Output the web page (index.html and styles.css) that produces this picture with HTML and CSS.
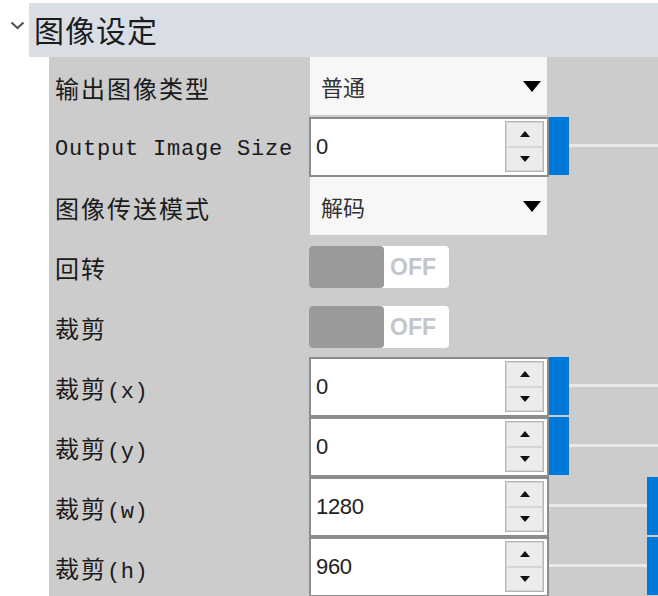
FILE: index.html
```html
<!DOCTYPE html>
<html lang="zh-CN">
<head>
  <meta charset="UTF-8">
  <meta name="viewport" content="width=device-width, initial-scale=1.0">
  <title>图像设定</title>
  <link rel="stylesheet" href="styles.css">
</head>
<body>
  <div class="page">
    <header class="group-head">
      <span class="chevron">
        <svg width="15" height="9" viewBox="0 0 15 9"><path d="M1.5 1.5 L7.5 7 L13.5 1.5" fill="none" stroke="#555" stroke-width="2.2"/></svg>
      </span>
      <h1 class="group-title">图像设定</h1>
    </header>

    <section class="panel">
      <div class="row">
        <span class="label">输出图像类型</span>
        <div class="select"><span>普通</span><i class="caret"></i></div>
      </div>

      <div class="row">
        <span class="label mono">Output Image Size</span>
        <div class="spin">
          <span class="value">0</span>
          <div class="spin-btns"><b class="up"></b><b class="down"></b></div>
        </div>
        <div class="slider"><div class="track"></div><div class="thumb" style="left:0px"></div></div>
      </div>

      <div class="row">
        <span class="label">图像传送模式</span>
        <div class="select"><span>解码</span><i class="caret"></i></div>
      </div>

      <div class="row">
        <span class="label">回转</span>
        <div class="toggle"><span class="knob"></span><span class="state">OFF</span></div>
      </div>

      <div class="row">
        <span class="label">裁剪</span>
        <div class="toggle"><span class="knob"></span><span class="state">OFF</span></div>
      </div>

      <div class="row">
        <span class="label">裁剪<span class="mono">(x)</span></span>
        <div class="spin">
          <span class="value">0</span>
          <div class="spin-btns"><b class="up"></b><b class="down"></b></div>
        </div>
        <div class="slider"><div class="track"></div><div class="thumb" style="left:0px"></div></div>
      </div>

      <div class="row">
        <span class="label">裁剪<span class="mono">(y)</span></span>
        <div class="spin">
          <span class="value">0</span>
          <div class="spin-btns"><b class="up"></b><b class="down"></b></div>
        </div>
        <div class="slider"><div class="track"></div><div class="thumb" style="left:0px"></div></div>
      </div>

      <div class="row">
        <span class="label">裁剪<span class="mono">(w)</span></span>
        <div class="spin">
          <span class="value">1280</span>
          <div class="spin-btns"><b class="up"></b><b class="down"></b></div>
        </div>
        <div class="slider"><div class="track"></div><div class="thumb" style="left:98px"></div></div>
      </div>

      <div class="row">
        <span class="label">裁剪<span class="mono">(h)</span></span>
        <div class="spin">
          <span class="value">960</span>
          <div class="spin-btns"><b class="up"></b><b class="down"></b></div>
        </div>
        <div class="slider"><div class="track"></div><div class="thumb" style="left:98px"></div></div>
      </div>
    </section>
  </div>
</body>
</html>
```

FILE: styles.css
```css
/* styles.css */
* {
  margin: 0;
  padding: 0;
  box-sizing: border-box;
}

body {
  font-family: "Noto Sans CJK SC", "Liberation Sans", sans-serif;
  background: #ffffff;
  color: #1a1a1a;
  overflow: hidden;
}

.page {
  width: 658px;
  height: 596px;
  padding-top: 3px;
  overflow: hidden;
}

/* En-tete du groupe */
.group-head {
  display: flex;
  height: 54px;
}

.chevron {
  width: 29px;
  display: flex;
  align-items: center;
  justify-content: center;
  padding-left: 6px;
  padding-bottom: 9px;
}

.group-title {
  flex: 1;
  background: #d9dee6;
  font-size: 30px;
  font-weight: normal;
  letter-spacing: 1px;
  line-height: 52px;
  padding-left: 5px;
  color: #1c1c1c;
}

/* Panneau */
.panel {
  margin-left: 49px;
  background: #cccccc;
}

.row {
  display: grid;
  grid-template-columns: 260px 240px 1fr;
  height: 60px;
  align-items: center;
}

.label {
  padding-left: 6px;
  font-size: 24px;
  letter-spacing: 2px;
  white-space: nowrap;
}

.mono {
  font-family: "Liberation Mono", monospace;
  font-size: 22px;
  letter-spacing: 0.5px;
}

.label.mono {
  letter-spacing: 0.8px;
  padding-top: 5px;
}

/* Liste deroulante */
.select {
  margin-left: 1px;
  width: 237px;
  height: 58px;
  align-self: start;
  background: #f7f7f7;
  display: flex;
  align-items: center;
  justify-content: space-between;
  padding: 0 6px 0 11px;
  font-size: 22px;
  color: #333;
}

.caret {
  width: 0;
  height: 0;
  border-left: 9px solid transparent;
  border-right: 9px solid transparent;
  border-top: 11px solid #000;
}

/* Champ numerique */
.spin {
  height: 60px;
  border: 2px solid #8c8c8c;
  background: #fff;
  display: flex;
  align-items: center;
  justify-content: space-between;
  padding: 2px 3px 3px 5px;
}

.value {
  font-family: "Liberation Sans", sans-serif;
  font-size: 22px;
  letter-spacing: -0.3px;
  color: #222;
}

.spin-btns {
  width: 39px;
  height: 51px;
  display: flex;
  flex-direction: column;
  border: 1px solid #b4b4b4;
}

.spin-btns b {
  flex: 1;
  background: #ececec;
  border: 1px solid #d6d6d6;
  display: flex;
  align-items: center;
  justify-content: center;
}

.spin-btns b::after {
  content: "";
  border-left: 5px solid transparent;
  border-right: 5px solid transparent;
}

.spin-btns .up::after {
  border-bottom: 6px solid #111;
}

.spin-btns .down::after {
  border-top: 6px solid #111;
}

/* Curseur */
.slider {
  position: relative;
  height: 60px;
  width: 130px;
}

.track {
  position: absolute;
  left: 0;
  right: 0;
  top: 27px;
  height: 3px;
  background: #e6eaea;
}

.thumb {
  position: absolute;
  top: 0;
  width: 20px;
  height: 58px;
  background: #0078d7;
}

/* Interrupteur */
.toggle {
  width: 140px;
  height: 42px;
  background: #fff;
  border-radius: 4px;
  display: flex;
  align-items: center;
}

.knob {
  width: 75px;
  height: 42px;
  background: #9a9a9a;
  border-radius: 4px;
}

.state {
  padding-left: 6px;
  font-family: "Liberation Sans", sans-serif;
  font-weight: bold;
  font-size: 23px;
  color: #c3c6cc;
}
```
